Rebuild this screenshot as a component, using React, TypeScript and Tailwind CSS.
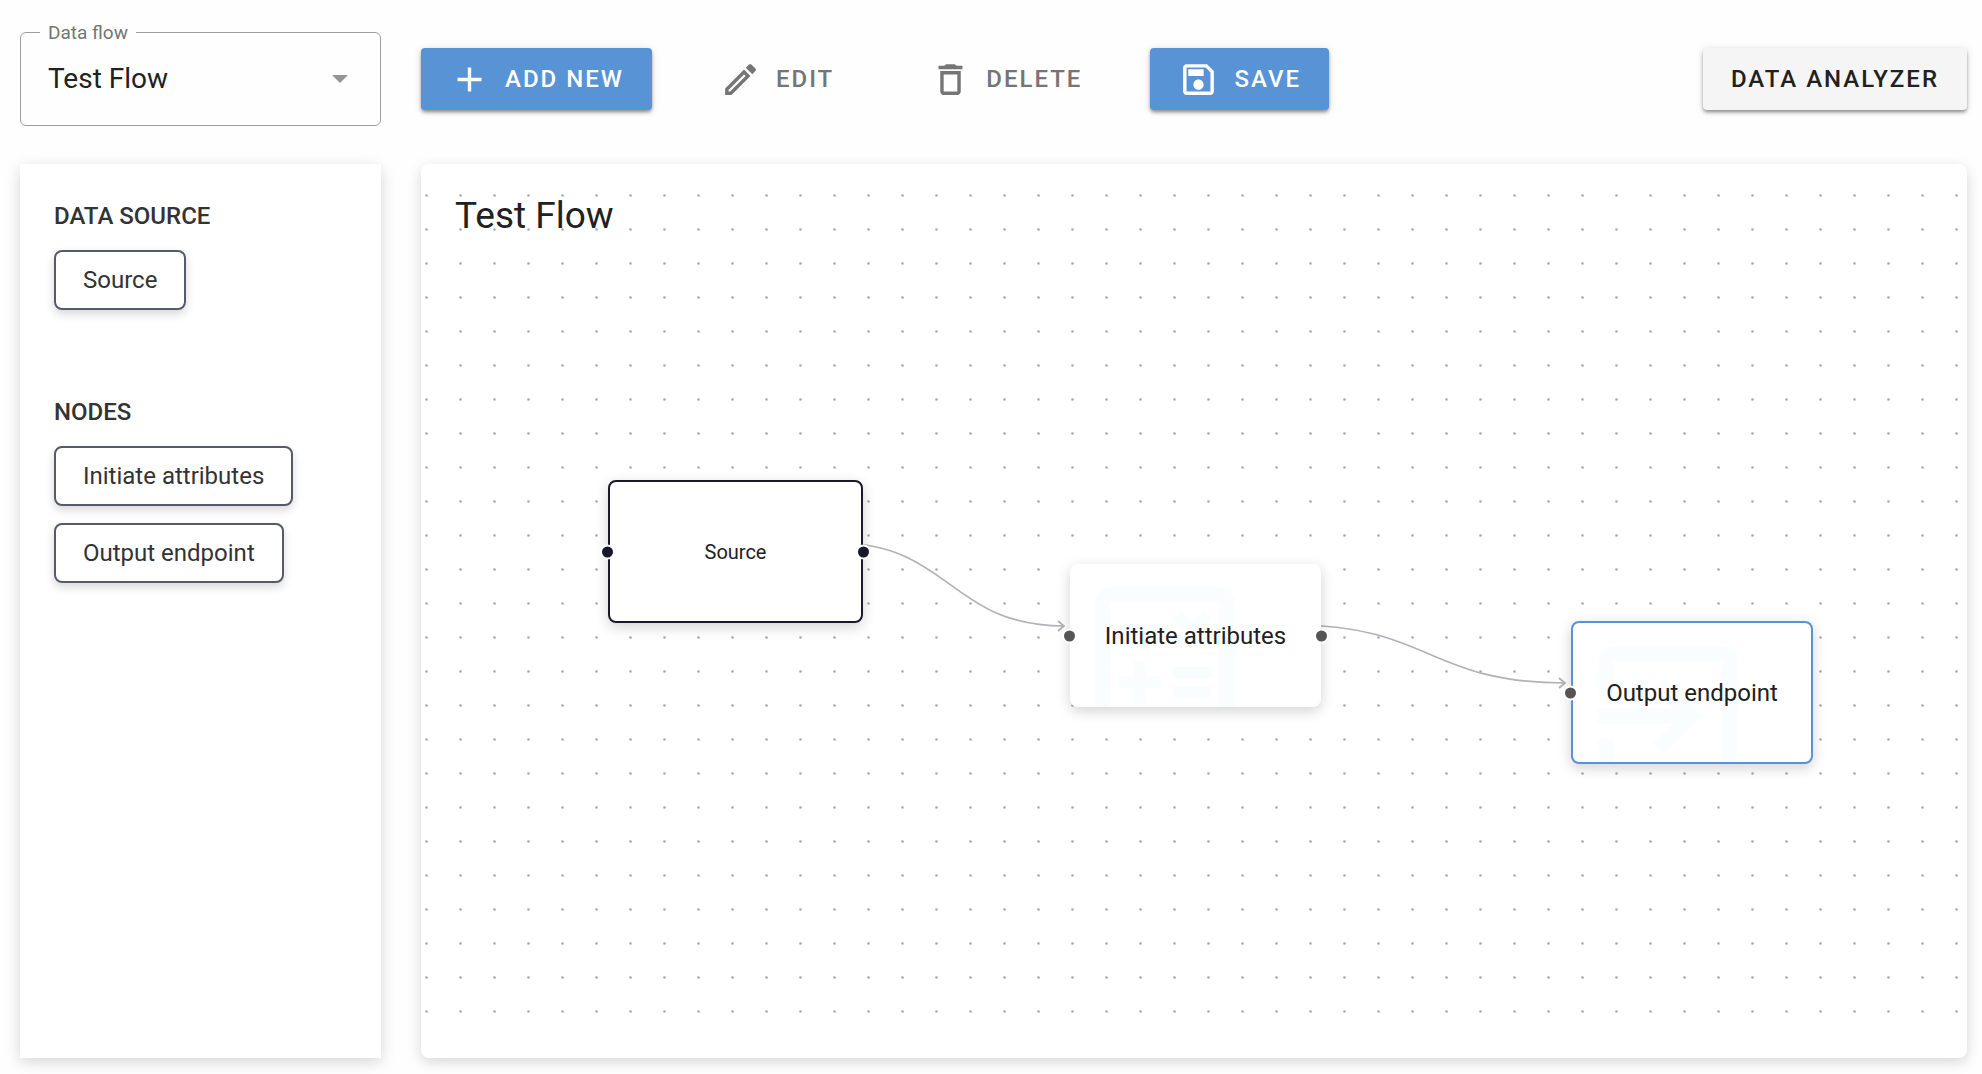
import type { ReactNode } from "react";

const ICONS = {
  add: "M19 13h-6v6h-2v-6H5v-2h6V5h2v6h6v2z",
  edit: "M14.06 9.02l.92.92L5.92 19H5v-.92l9.06-9.06M17.66 3c-.25 0-.51.1-.7.29l-1.83 1.83 3.75 3.75 1.83-1.83c.39-.39.39-1.02 0-1.41l-2.34-2.34c-.2-.2-.45-.29-.71-.29zm-3.6 3.19L3 17.25V21h3.75L17.81 9.94l-3.75-3.75z",
  trash:
    "M6 19c0 1.1.9 2 2 2h8c1.1 0 2-.9 2-2V7H6v12zM8 9h8v10H8V9zm7.5-5l-1-1h-5l-1 1H5v2h14V4h-3.5z",
  save: "M17 3H5c-1.11 0-2 .9-2 2v14c0 1.1.89 2 2 2h14c1.1 0 2-.9 2-2V7l-4-4zm2 16H5V5h11.17L19 7.83V19zm-7-7c-1.66 0-3 1.34-3 3s1.34 3 3 3 3-1.34 3-3-1.34-3-3-3zM6 6h9v4H6z",
  calculator:
    "M19 3H5c-1.1 0-2 .9-2 2v14c0 1.1.9 2 2 2h14c1.1 0 2-.9 2-2V5c0-1.1-.9-2-2-2zm0 16H5V5h14v14zM6.25 7.72h5v1.5h-5zM13 15.75h5v1.5h-5zM13 13.25h5v1.5h-5zM8 18h1.5v-2h2v-1.5h-2v-2H8v2H6V16h2zM14.09 10.95l1.41-1.41 1.41 1.41 1.06-1.06-1.41-1.42 1.41-1.41L16.91 6 15.5 7.41 14.09 6l-1.06 1.06 1.41 1.41-1.41 1.42z",
  exit: "M10.09 15.59L11.5 17l5-5-5-5-1.41 1.41L12.67 11H3v2h9.67l-2.58 2.59zM19 3H5c-1.11 0-2 .9-2 2v4h2V5h14v14H5v-4H3v4c0 1.1.89 2 2 2h14c1.1 0 2-.9 2-2V5c0-1.1-.9-2-2-2z",
};

function Icon({ name, className }: { name: keyof typeof ICONS; className: string }) {
  return (
    <svg viewBox="0 0 24 24" fill="currentColor" aria-hidden="true" className={className}>
      <path d={ICONS[name]} />
    </svg>
  );
}

const RAISED =
  "shadow-[0_3px_4px_-1px_rgba(0,0,0,0.3),0_2px_3px_rgba(0,0,0,0.16),0_1px_8px_rgba(0,0,0,0.12)]";
const VARIANTS = {
  primary: `bg-[#5893d6] text-white ${RAISED}`,
  neutral: `bg-[#f5f5f5] text-[#212121] ${RAISED}`,
  text: "text-[#757575]",
};

function ToolButton({
  icon,
  variant,
  children,
}: {
  icon?: keyof typeof ICONS;
  variant: keyof typeof VARIANTS;
  children: ReactNode;
}) {
  return (
    <button
      type="button"
      className={`flex h-[62px] items-center gap-[15px] rounded px-7 text-2xl font-medium tracking-[2px] whitespace-nowrap uppercase ${VARIANTS[variant]}`}
    >
      {icon && <Icon name={icon} className="size-[41px] shrink-0" />}
      {children}
    </button>
  );
}

function Palette({ title, items }: { title: string; items: string[] }) {
  return (
    <section className="flex flex-col items-start">
      <h2 className="mb-[18px] text-2xl leading-8 font-medium text-[#333] uppercase">{title}</h2>
      <div className="flex flex-col items-start gap-[17px]">
        {items.map((item) => (
          <button
            key={item}
            type="button"
            className="h-[60px] rounded-lg border-2 border-[#565b69] bg-white px-[27px] text-2xl text-[#333] shadow-[0_4px_10px_rgba(0,0,0,0.16)]"
          >
            {item}
          </button>
        ))}
      </div>
    </section>
  );
}

function Handle({ className }: { className: string }) {
  return (
    <span
      className={`absolute top-1/2 box-content size-[11px] -translate-y-1/2 rounded-full border-2 border-white ${className}`}
    />
  );
}

function FlowNode({
  label,
  icon,
  place,
  handles,
}: {
  label: string;
  icon?: keyof typeof ICONS;
  place: string;
  handles: string[];
}) {
  return (
    <div
      className={`absolute h-[143px] rounded-lg bg-white shadow-[0_4px_14px_rgba(0,0,0,0.18)] ${place}`}
    >
      <div className="relative flex h-full items-center justify-center overflow-hidden rounded-md">
        {icon && (
          <Icon name={icon} className="absolute top-0 left-0.5 size-[186px] text-[#fafdfe]" />
        )}
        <span className="relative whitespace-nowrap">{label}</span>
      </div>
      {handles.map((handle) => (
        <Handle key={handle} className={handle} />
      ))}
    </div>
  );
}

export default function App() {
  return (
    <div className="flex min-h-screen flex-col bg-[#fefefe] pt-8 pr-[15px] pb-4 pl-5 font-['Roboto',sans-serif] text-[#212121]">
      <header className="flex items-center gap-10">
        <div className="relative h-[94px] w-[361px] shrink-0">
          <select
            id="flow"
            className="h-full w-full appearance-none rounded-md border border-[#9e9e9e] bg-transparent px-[27px] text-[28px]"
          >
            <option>Test Flow</option>
          </select>
          <label
            htmlFor="flow"
            className="absolute -top-3 left-5 bg-[#fefefe] px-2 text-[19px] leading-[26px] text-[#757575]"
          >
            Data flow
          </label>
          <svg
            viewBox="0 0 16 8"
            aria-hidden="true"
            className="pointer-events-none absolute top-[43px] right-[33px] h-2 w-4"
          >
            <path d="M0 0h16L8 8z" fill="#949494" />
          </svg>
        </div>
        <div className="flex flex-1 items-center justify-between">
          <div className="flex items-center gap-10">
            <ToolButton icon="add" variant="primary">
              Add new
            </ToolButton>
            <ToolButton icon="edit" variant="text">
              Edit
            </ToolButton>
            <ToolButton icon="trash" variant="text">
              Delete
            </ToolButton>
            <ToolButton icon="save" variant="primary">
              Save
            </ToolButton>
          </div>
          <ToolButton variant="neutral">Data Analyzer</ToolButton>
        </div>
      </header>

      <div className="mt-[38px] flex flex-1 gap-10">
        <aside className="flex w-[361px] shrink-0 flex-col gap-[86px] bg-white px-[34px] pt-9 shadow-[0_4px_14px_rgba(0,0,0,0.16)]">
          <Palette title="Data source" items={["Source"]} />
          <Palette title="Nodes" items={["Initiate attributes", "Output endpoint"]} />
        </aside>

        <main className="relative flex-1 overflow-hidden rounded-lg bg-white shadow-[0_4px_14px_rgba(0,0,0,0.16)]">
          <svg aria-hidden="true" className="absolute inset-0 h-full w-full">
            <defs>
              <pattern id="dots" width="34" height="34" x="4" y="30" patternUnits="userSpaceOnUse">
                <circle cx="1.5" cy="1.5" r="1.3" fill="#aaa" />
              </pattern>
            </defs>
            <rect width="100%" height="860" fill="url(#dots)" />
            <g fill="none" stroke="#b1b1b7" strokeWidth="1.7">
              <path d="M416 379C529 379 529 462 643 462" />
              <path d="M873 461C1008 461 1008 519 1144 519" />
              <path d="M637 457l6 5-6 5M1138 514l6 5-6 5" />
            </g>
          </svg>
          <h1 className="relative px-[34px] pt-7 text-[37px] leading-12">Test Flow</h1>
          <FlowNode
            label="Source"
            place="left-[187px] top-[316px] w-[255px] border-2 border-[#1a192b] text-xl"
            handles={["-left-[10px] bg-[#1a192b]", "-right-[10px] bg-[#1a192b]"]}
          />
          <FlowNode
            label="Initiate attributes"
            icon="calculator"
            place="left-[649px] top-[400px] w-[251px] text-2xl"
            handles={["-left-2 bg-[#555]", "-right-2 bg-[#555]"]}
          />
          <FlowNode
            label="Output endpoint"
            icon="exit"
            place="left-[1150px] top-[457px] w-[242px] border-2 border-[#5893d6] text-2xl"
            handles={["-left-[10px] bg-[#555]"]}
          />
        </main>
      </div>
    </div>
  );
}
